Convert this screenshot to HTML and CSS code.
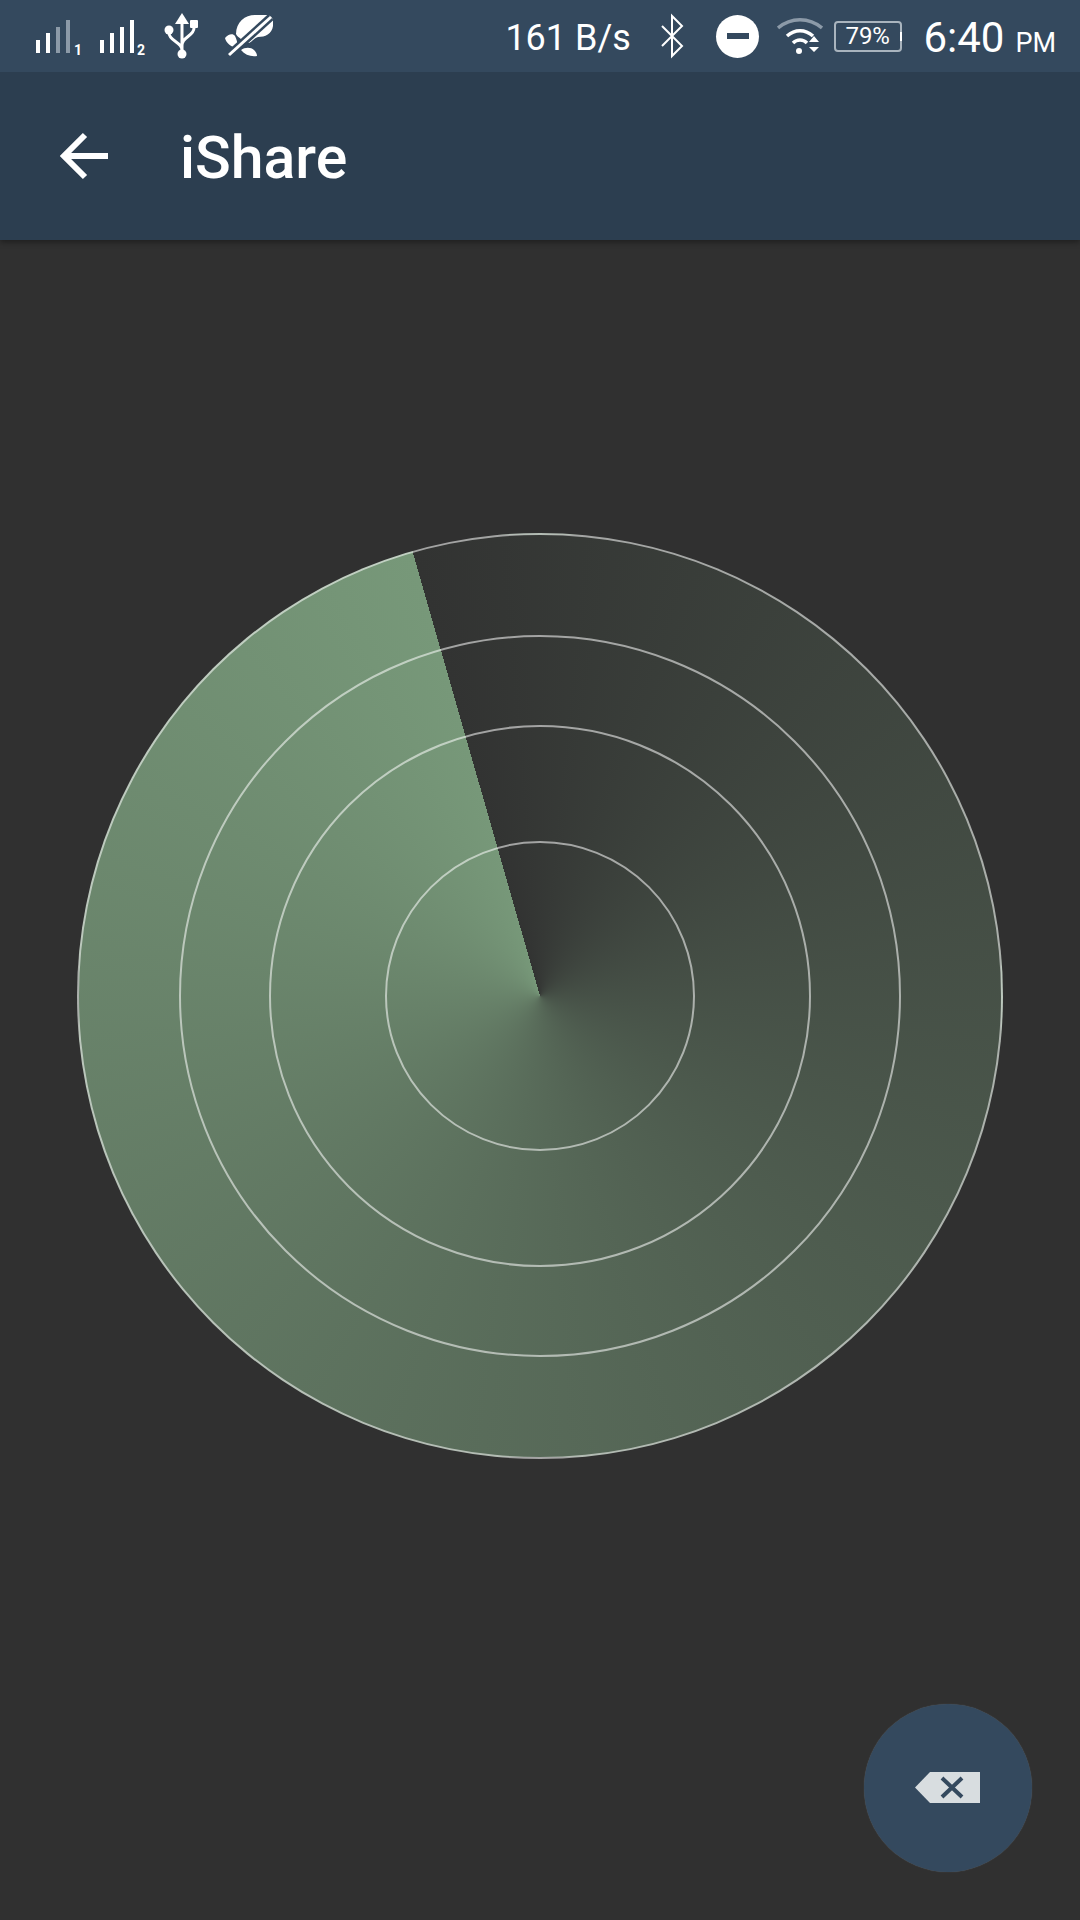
FILE: index.html
```html
<!DOCTYPE html>
<html>
  <head>
    <title>iShare</title>
    <meta name="viewport" content="width=device-width, initial-scale=1.0">
    <link rel="stylesheet" href="styles.css">
  </head>
  <body>
    <header class="appbar">
      <div class="status">
        <div class="status-left">
          <svg class="ic-signal" viewBox="0 0 46 72">
            <rect x="0" y="40" width="4" height="13" fill="#fff"/>
            <rect x="10" y="33" width="4" height="20" fill="#fff"/>
            <rect x="20" y="27" width="4" height="26" fill="#8c9aa8"/>
            <rect x="30" y="20" width="4" height="33" fill="#8c9aa8"/>
            <text x="38" y="55" class="sim">1</text>
          </svg>
          <svg class="ic-signal" viewBox="0 0 46 72">
            <rect x="0" y="40" width="4" height="13" fill="#fff"/>
            <rect x="10" y="33" width="4" height="20" fill="#fff"/>
            <rect x="20" y="27" width="4" height="26" fill="#fff"/>
            <rect x="30" y="20" width="4" height="33" fill="#fff"/>
            <text x="37" y="55" class="sim">2</text>
          </svg>
          <svg class="ic-usb" viewBox="0 0 38 72">
            <path d="M18 13l-7 11h14z" fill="#fff"/>
            <path d="M18 22v30M5 30v3c0 8 13 9 13 17M30 24v4c0 8-12 9-12 17" fill="none" stroke="#fff" stroke-width="3"/>
            <circle cx="18" cy="54" r="4.500" fill="#fff"/>
            <circle cx="5" cy="30" r="4.500" fill="#fff"/>
            <rect x="26" y="20" width="8" height="8" rx="1" fill="#fff"/>
          </svg>
          <svg class="ic-leaf" viewBox="0 0 48 72">
            <path d="M11 34C11 22 20 15 30 15h12c5 0 7 5 6 11-1 8-8 11-15 11-4 1-5 4-9 6-6-3-11-5-13-9z" fill="#fff"/>
            <path d="M0 38c3-4 8-5 10-2 2 4 3 8 2 12-6-1-11-5-12-10zM16 50c4-3 10-3 13 0 2 2 3 4 3 6-6 1-12-1-16-6z" fill="#fff"/>
            <path d="M4 55L46 17" stroke="#34495e" stroke-width="8" fill="none"/>
            <path d="M4 55L46 17" stroke="#fff" stroke-width="3" fill="none"/>
          </svg>
        </div>
        <div class="status-right">
          <span class="speed">161 B/s</span>
          <svg class="ic-bt" viewBox="0 0 24 72">
            <path d="M2 26l20 20-10 10V16l10 10-20 20" fill="none" stroke="#fff" stroke-width="2"/>
          </svg>
          <div class="dnd"><i></i></div>
          <svg class="ic-wifi" viewBox="0 0 46 72">
            <path d="M1 28c13-11 31-11 44 0" fill="none" stroke="#8c9aa8" stroke-width="3.500"/>
            <path d="M10 36c8-7 18-7 26 0" fill="none" stroke="#fff" stroke-width="3.500"/>
            <path d="M16 43c4-4 10-4 14 0" fill="none" stroke="#fff" stroke-width="3.500"/>
            <circle cx="22" cy="51" r="3" fill="#fff"/>
            <path d="M32 42l5-6 5 6zM32 47h10l-5 5z" fill="#fff"/>
          </svg>
          <div class="battery">79%</div>
          <span class="clock">6:40<small>PM</small></span>
        </div>
      </div>
      <div class="toolbar">
        <svg class="ic-back" viewBox="0 0 48 48">
          <path d="M48 24H4M25 3L4 24l21 21" fill="none" stroke="#fff" stroke-width="6"/>
        </svg>
        <h1>iShare</h1>
      </div>
    </header>

    <main class="content">
      <div class="radar">
        <div class="ring ring2">
          <div class="ring ring3">
            <div class="ring ring4"></div>
          </div>
        </div>
      </div>
    </main>

    <button class="fab">
      <svg viewBox="0 0 66 32" width="66" height="32">
        <path d="M0 15.500L15 0h50v31H15z" fill="#d8dde0"/>
        <path d="M27 6l20 19M47 6L27 25" stroke="#34495e" stroke-width="4" fill="none"/>
      </svg>
    </button>
  </body>
</html>
```

FILE: styles.css
```css
*{
  box-sizing:border-box;
  margin:0;
  padding:0;
}
html,body{
  height:100%;
}
body{
  width:1080px;
  height:1920px;
  background:#303030;
  color:#fff;
  font-family:Roboto,"Liberation Sans",sans-serif;
  overflow:hidden;
  position:relative;
}
.appbar{
  box-shadow:0 2px 6px rgba(0,0,0,.4);
}
.status{
  height:72px;
  background:#34495e;
  display:flex;
  justify-content:space-between;
  padding:0 24px 0 36px;
}
.status-left,.status-right{
  display:flex;
  align-items:center;
}
.status svg{
  height:72px;
  display:block;
}
.ic-signal{
  width:46px;
  margin-right:18px;
}
.ic-usb{
  width:38px;
  margin-right:23px;
}
.ic-leaf{
  width:48px;
}
.sim{
  font-size:14px;
  font-weight:700;
  fill:#fff;
}
.speed{
  font-size:36px;
  width:155px;
  padding-top:3px;
}
.ic-bt{
  width:24px;
  margin-right:32px;
}
.dnd{
  width:43px;
  height:43px;
  border-radius:50%;
  background:#fff;
  display:flex;
  align-items:center;
  justify-content:center;
  margin-right:18px;
}
.dnd i{
  display:block;
  width:22px;
  height:6px;
  background:#34495e;
}
.ic-wifi{
  width:46px;
  margin-right:11px;
}
.battery{
  position:relative;
  width:68px;
  height:31px;
  border:2px solid #a9b4be;
  border-radius:4px;
  font-size:24px;
  line-height:27px;
  padding-left:9px;
  margin-right:21px;
}
.battery::after{
  content:"";
  position:absolute;
  right:-2px;
  top:9px;
  width:2px;
  height:9px;
  background:#fff;
}
.clock{
  font-size:42px;
  padding-top:2px;
}
.clock small{
  font-size:27px;
  margin-left:11px;
}
.toolbar{
  height:168px;
  background:#2c3e50;
  display:flex;
  align-items:center;
  padding-left:60px;
}
.ic-back{
  width:48px;
  height:48px;
  margin-right:72px;
}
.toolbar h1{
  font-size:59px;
  font-weight:500;
  padding-top:2px;
}
.content{
  display:flex;
  justify-content:center;
  padding-top:293px;
}
.ring{
  border-radius:50%;
  border:2px solid rgba(255,255,255,.55);
  display:flex;
  align-items:center;
  justify-content:center;
}
.radar{
  width:926px;
  height:926px;
  border-radius:50%;
  border:2px solid rgba(255,255,255,.55);
  display:flex;
  align-items:center;
  justify-content:center;
  background:conic-gradient(from -16deg,#323332,#779879);
}
.ring2{
  width:722px;
  height:722px;
}
.ring3{
  width:542px;
  height:542px;
}
.ring4{
  width:310px;
  height:310px;
}
.fab{
  position:absolute;
  right:48px;
  bottom:48px;
  width:168px;
  height:168px;
  border:none;
  border-radius:50%;
  background:#34495e;
  display:flex;
  align-items:center;
  justify-content:center;
  padding-right:1px;
  box-shadow:0 0 1px rgba(255,255,255,.25);
}
```
